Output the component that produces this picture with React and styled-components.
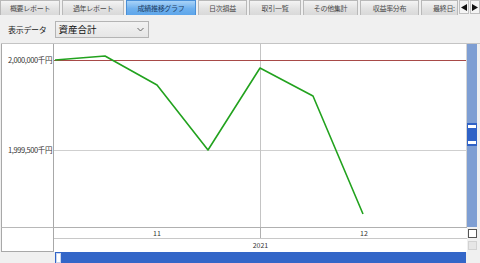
import React from "react";
import styled, { createGlobalStyle } from "styled-components";

const Global = createGlobalStyle`
  html, body { margin: 0; padding: 0; background: #f0f0f0; }
  body { font-family: "Noto Sans CJK JP", "Noto Sans", sans-serif; }
`;

const Root = styled.div`
  width: 480px;
  height: 263px;
  overflow: hidden;
  background: #f0f0f0;
  display: flex;
  flex-direction: column;
`;

const TabBar = styled.div`
  display: flex;
  height: 15px;
  gap: 2px;
  flex-shrink: 0;
`;

const Tab = styled.div`
  box-sizing: border-box;
  width: ${(p) => p.$w}px;
  height: 15px;
  border: 1px solid ${(p) => (p.$active ? "#4a8fd6" : "#b9b9b9")};
  border-bottom: none;
  background: ${(p) =>
    p.$active
      ? "linear-gradient(#a9d3f8, #6eb0ee 55%, #5ea6ea)"
      : "linear-gradient(#f4f4f4, #e2e2e2 55%, #d9d9d9)"};
  color: ${(p) => (p.$active ? "#1d3c63" : "#4a4a4a")};
  font-size: 7px;
  line-height: 13px;
  letter-spacing: -0.3px;
  display: flex;
  align-items: center;
  justify-content: ${(p) => (p.$left ? "flex-start" : "center")};
  padding-left: ${(p) => (p.$left ? "11px" : "0")};
  white-space: nowrap;
  overflow: hidden;
`;

const ArrowGroup = styled.div`
  display: flex;
  gap: 1px;
  margin-left: -1px;
`;

const ArrowBtn = styled.div`
  box-sizing: border-box;
  width: 10px;
  height: 14px;
  border: 1px solid #c0c0c0;
  background: #f4f4f4;
  display: flex;
  align-items: center;
  justify-content: center;
`;

const Toolbar = styled.div`
  height: 28px;
  display: flex;
  align-items: center;
  gap: 8px;
  padding-left: 8px;
  flex-shrink: 0;
`;

const Label = styled.span`
  font-size: 8px;
  color: #222;
  letter-spacing: -0.3px;
`;

const Select = styled.div`
  box-sizing: border-box;
  width: 94px;
  height: 17px;
  border: 1px solid #b4b4b4;
  background: linear-gradient(#f2f2f2, #e6e6e6);
  display: flex;
  align-items: center;
  justify-content: space-between;
  padding: 0 4px 0 3px;
  font-size: 9.5px;
  color: #111;
`;

const Frame = styled.div`
  display: grid;
  grid-template-columns: 53px 413px 10px;
  grid-template-rows: 183px 12px 13px 11px;
  margin-left: 1px;
  border-top: 1px solid #c4c4c4;
`;

const AxisCell = styled.div`
  position: relative;
  box-sizing: border-box;
  background: #fff;
  border-left: 1px solid #a8a8a8;
  border-right: 1px solid #a8a8a8;
`;

const AxisLabel = styled.span`
  position: absolute;
  right: 1px;
  font-size: 7.5px;
  line-height: 8px;
  color: #333;
  letter-spacing: -0.4px;
  white-space: nowrap;
`;

const AxisFoot = styled.div`
  grid-row: 2 / 4;
  box-sizing: border-box;
  background: #fff;
  border: 1px solid #a8a8a8;
  border-top-color: #b8b8b8;
`;

const Plot = styled.div`
  box-sizing: border-box;
  background: #fff;
  border-right: 1px solid #d4d4d4;
  svg { display: block; }
`;

const MonthRow = styled.div`
  box-sizing: border-box;
  display: grid;
  grid-template-columns: 206px 207px;
  background: #fff;
  border-top: 1px solid #b0b0b0;
  border-bottom: 1px solid #c8c8c8;
`;

const Month = styled.div`
  box-sizing: border-box;
  font-size: 7px;
  line-height: 10px;
  color: #333;
  text-align: center;
  border-left: ${(p) => (p.$divider ? "1px solid #b0b0b0" : "none")};
`;

const YearRow = styled.div`
  background: #fff;
  font-size: 7px;
  line-height: 13px;
  color: #333;
  text-align: center;
`;

const HScroll = styled.div`
  grid-column: 2;
  background: #3366c8;
  margin-left: 1px;
  margin-right: 1px;
  display: flex;
  align-items: center;
  padding-left: 1px;
`;

const HThumb = styled.div`
  width: 3px;
  height: 8px;
  background: #fff;
  border: 1px solid #c8d6f0;
`;

const VScroll = styled.div`
  background: #7e9ed3;
  position: relative;
`;

const VThumb = styled.div`
  position: absolute;
  left: 0;
  right: 0;
  top: 79px;
  height: 23px;
  background: #2f62c6;
  display: flex;
  flex-direction: column;
  justify-content: space-between;
  align-items: center;
  padding: 2px 0;
  box-sizing: border-box;
`;

const Grip = styled.div`
  width: 8px;
  height: 3px;
  background: #fff;
`;

const CheckCell = styled.div`
  display: flex;
  align-items: center;
  justify-content: center;
  padding-left: 1px;
`;

const Check = styled.div`
  box-sizing: border-box;
  width: 9px;
  height: 9px;
  border: 1px solid ${(p) => (p.$dim ? "#d2d2d2" : "#555")};
  background: ${(p) => (p.$dim ? "#e6e6e6" : "#fff")};
`;

const tabs = [
  { t: "概要レポート", w: 60 },
  { t: "過年レポート", w: 62 },
  { t: "成績推移グラフ", w: 70, active: true },
  { t: "日次損益", w: 49 },
  { t: "取引一覧", w: 52 },
  { t: "その他集計", w: 55 },
  { t: "収益率分布", w: 59 },
  { t: "最終日:", w: 37, left: true },
];

const points = [
  [1, 16],
  [51, 12],
  [103, 41],
  [154, 106],
  [206, 24],
  [259, 52],
  [309, 170],
];

export default function App() {
  return (
    <Root>
      <Global />
      <TabBar>
        {tabs.map((t) => (
          <Tab key={t.t} $w={t.w} $active={t.active} $left={t.left}>
            {t.t}
          </Tab>
        ))}
        <ArrowGroup>
          <ArrowBtn>
            <svg width="6" height="7" viewBox="0 0 6 7">
              <path d="M0 3.5 L6 0 L6 7 Z" fill="#111" />
            </svg>
          </ArrowBtn>
          <ArrowBtn>
            <svg width="6" height="7" viewBox="0 0 6 7">
              <path d="M6 3.5 L0 0 L0 7 Z" fill="#111" />
            </svg>
          </ArrowBtn>
        </ArrowGroup>
      </TabBar>
      <Toolbar>
        <Label>表示データ</Label>
        <Select>
          <span>資産合計</span>
          <svg width="7" height="5" viewBox="0 0 7 5">
            <path d="M0.5 1 L3.5 4 L6.5 1" fill="none" stroke="#666" strokeWidth="1" />
          </svg>
        </Select>
      </Toolbar>
      <Frame>
        <AxisCell>
          <AxisLabel style={{ top: 12 }}>2,000,000千円</AxisLabel>
          <AxisLabel style={{ top: 102 }}>1,999,500千円</AxisLabel>
        </AxisCell>
        <Plot>
          <svg width="412" height="183" viewBox="0 0 412 183">
            <line x1="0" y1="106.5" x2="412" y2="106.5" stroke="#cfcfcf" strokeWidth="1" />
            <line x1="206.5" y1="0" x2="206.5" y2="183" stroke="#c4c4c4" strokeWidth="1" />
            <line x1="0" y1="16.5" x2="412" y2="16.5" stroke="#a84a48" strokeWidth="1" />
            <polyline
              points={points.map((p) => p.join(",")).join(" ")}
              fill="none"
              stroke="#22a21e"
              strokeWidth="1.6"
              strokeLinejoin="round"
            />
          </svg>
        </Plot>
        <VScroll>
          <VThumb>
            <Grip />
            <Grip />
          </VThumb>
        </VScroll>
        <AxisFoot />
        <MonthRow>
          <Month>11</Month>
          <Month $divider>12</Month>
        </MonthRow>
        <CheckCell>
          <Check />
        </CheckCell>
        <YearRow>2021</YearRow>
        <CheckCell>
          <Check $dim />
        </CheckCell>
        <HScroll>
          <HThumb />
        </HScroll>
      </Frame>
    </Root>
  );
}
